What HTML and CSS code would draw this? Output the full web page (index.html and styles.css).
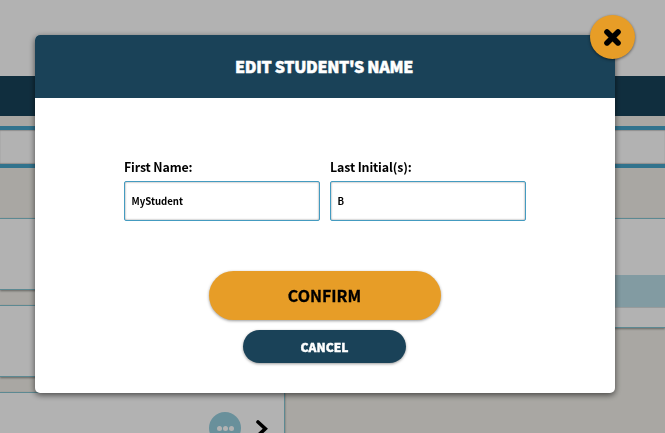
FILE: index.html
```html
<!DOCTYPE html>
<html lang="en">
<head>
  <meta charset="UTF-8">
  <meta name="viewport" content="width=device-width, initial-scale=1">
  <title>Edit Student's Name</title>
  <link rel="stylesheet" href="styles.css">
</head>
<body>
  <!-- Dashboard behind the dialog -->
  <div class="page">
    <div class="top-bar"></div>
    <div class="nav-bar"></div>
    <div class="tab-bar"></div>
    <div class="columns">
      <div class="student-list">
        <div class="student-card"></div>
        <div class="student-card"></div>
        <div class="student-card">
          <span class="more-btn"><i></i><i></i><i></i></span>
          <svg class="chevron" width="14" height="20" viewBox="0 0 14 20">
            <path d="M3 3 L10.3 9.7 L3 16.5" fill="none" stroke="#000" stroke-width="3.6" stroke-linecap="round"/>
          </svg>
        </div>
      </div>
      <div class="details">
        <div class="details-row"></div>
      </div>
    </div>
  </div>

  <div class="overlay">
    <div class="modal">
      <button class="close-btn" type="button" aria-label="Close">
        <svg width="18" height="18" viewBox="0 0 18 18">
          <path d="M3 3.9 L14 14.9 M14 3.9 L3 14.9" stroke="#000" stroke-width="5.6" stroke-linecap="round"/>
        </svg>
      </button>
      <h1 class="modal-header">EDIT STUDENT'S NAME</h1>
      <form class="modal-body">
        <div class="fields">
          <label class="field">First Name:
            <input type="text" name="firstName" value="MyStudent">
          </label>
          <label class="field">Last Initial(s):
            <input type="text" name="lastInitial" value="B">
          </label>
        </div>
        <button class="btn confirm-btn" type="button">CONFIRM</button>
        <button class="btn cancel-btn" type="button">CANCEL</button>
      </form>
    </div>
  </div>
</body>
</html>
```

FILE: styles.css
```css
* {
    box-sizing: border-box;
}

body {
    margin: 0;
    height: 433px;
    overflow: hidden;
    font-family: "Noto Sans CJK JP", "Noto Sans", sans-serif;
    font-weight: 700;
    color: #000;
}

/* Dashboard */
.page {
    height: 433px;
    overflow: hidden;
    background: #f2f0ea;
}

.top-bar {
    height: 76px;
    background: #fff;
}

.nav-bar {
    height: 40px;
    background: #18435a;
}

.tab-bar {
    height: 42px;
    margin-top: 10px;
    background: #fff;
    border-top: 4px solid #47a5cb;
    border-bottom: 4px solid #47a5cb;
    box-shadow: inset 0 1px 1px rgba(0, 0, 0, 0.2), inset 0 -1px 1px rgba(0, 0, 0, 0.2);
}

.columns {
    display: flex;
    align-items: flex-start;
    gap: 20px;
    margin-top: 50px;
}

.student-list {
    width: 285px;
}

.student-card {
    display: flex;
    justify-content: flex-end;
    align-items: flex-start;
    gap: 14px;
    height: 72px;
    margin-bottom: 15px;
    padding: 19px 15px 0 0;
    background: #fff;
    border: solid #84c4d2;
    border-width: 1px 1px 1px 0;
    box-shadow: 0 1px 2px rgba(0, 0, 0, 0.4);
}

.more-btn {
    display: flex;
    justify-content: center;
    align-items: center;
    gap: 1px;
    width: 32px;
    height: 32px;
    border-radius: 50%;
    background: #97cfdf;
}

.more-btn i {
    width: 5px;
    height: 5px;
    border-radius: 50%;
    background: #fff;
}

.chevron {
    margin-top: 7px;
}

.details {
    flex: 1;
    height: 110px;
    padding-top: 56px;
    background: #fff;
    border-top: 1px solid #84c4d2;
    border-bottom: 1px solid #84c4d2;
    box-shadow: 0 1px 2px rgba(0, 0, 0, 0.4);
}

.details-row {
    height: 33px;
    background: #bbdfe9;
    border-bottom: 1px solid #d9dfe0;
}

/* Dialog */
.overlay {
    position: fixed;
    inset: 0;
    padding: 35px 50px 40px 35px;
    background: rgba(0, 0, 0, 0.3);
}

.modal {
    position: relative;
    height: 358px;
    background: #fff;
    border-radius: 5px;
    box-shadow: 0 2px 6px rgba(0, 0, 0, 0.6);
}

.modal-header {
    height: 63px;
    margin: 0;
    padding-right: 2px;
    border-radius: 5px 5px 0 0;
    background: #1a4258;
    color: #fff;
    font-size: 16px;
    font-weight: 900;
    line-height: 63px;
    letter-spacing: -0.32px;
    text-align: center;
    -webkit-text-stroke: 0.5px #fff;
}

.close-btn {
    position: absolute;
    top: -20px;
    right: -20px;
    display: flex;
    justify-content: center;
    align-items: center;
    width: 45px;
    height: 44px;
    padding: 0;
    border: none;
    border-radius: 50%;
    background: #e79d27;
    box-shadow: 0 1px 3px rgba(0, 0, 0, 0.5);
}

.modal-body {
    display: flex;
    flex-direction: column;
    align-items: center;
    padding-top: 59px;
}

.fields {
    display: flex;
    gap: 10px;
    margin-bottom: 50px;
}

.field {
    width: 196px;
    font-size: 12.4px;
    line-height: 20px;
    letter-spacing: -0.14px;
}

.field input {
    display: block;
    width: 196px;
    height: 40px;
    margin-top: 4px;
    padding: 0 6.5px;
    border: 1px solid #449bc0;
    border-radius: 2px;
    box-shadow: inset 0 0 2px rgba(0, 0, 0, 0.5);
    font: inherit;
    font-size: 9.6px;
    letter-spacing: 0;
    color: #000;
}

.btn {
    padding: 0;
    border: none;
    border-radius: 25px;
    box-shadow: 0 1px 3px rgba(0, 0, 0, 0.4);
    font: inherit;
}

.confirm-btn {
    width: 232px;
    height: 49px;
    margin-bottom: 10px;
    padding: 0 1px 2px 0;
    background: #e79d27;
    color: #000;
    font-size: 16px;
    -webkit-text-stroke: 0.3px #000;
}

.cancel-btn {
    width: 163px;
    height: 33px;
    margin-right: 1px;
    background: #1a4258;
    color: #fff;
    font-size: 12px;
    font-weight: 900;
    -webkit-text-stroke: 0.4px #fff;
}
```
